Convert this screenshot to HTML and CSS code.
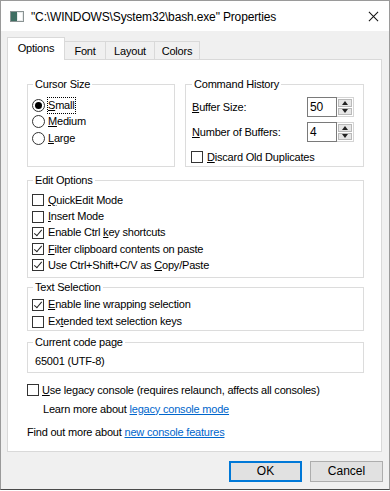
FILE: index.html
```
<!DOCTYPE html>
<html>
<head>
<meta charset="utf-8">
<link rel="stylesheet" href="styles.css">
</head>
<body>
<div class="window">
  <div class="titlebar">
    <svg class="app-icon" width="14" height="11" viewBox="0 0 14 11">
      <rect x="0.5" y="0.5" width="13" height="10" fill="#e9ecec" stroke="#8a9393"/>
      <rect x="1" y="1" width="6" height="9" fill="#3e6e62"/>
      <rect x="8" y="2" width="4" height="7" fill="#ffffff"/>
    </svg>
    <span class="title">"C:\WINDOWS\System32\bash.exe" Properties</span>
    <svg class="close" width="12" height="12" viewBox="0 0 12 12">
      <path d="M1 1 L11 11 M11 1 L1 11" stroke="#111" stroke-width="1.1" fill="none"/>
    </svg>
  </div>

  <div class="content">
    <div class="tabs">
      <div class="tab active t-options">Options</div>
      <div class="tab t-font">Font</div>
      <div class="tab t-layout">Layout</div>
      <div class="tab t-colors">Colors</div>
    </div>

    <div class="panel">
      <div class="row1">
        <fieldset class="group cursor">
          <legend>Cursor Size</legend>
          <div class="opt"><span class="radio on"></span><span class="focus"><u>S</u>mall</span></div>
          <div class="opt"><span class="radio"></span><span><u>M</u>edium</span></div>
          <div class="opt"><span class="radio"></span><span><u>L</u>arge</span></div>
        </fieldset>
        <fieldset class="group history">
          <legend>Command History</legend>
          <div class="spinrow">
            <span class="lbl"><u>B</u>uffer Size:</span>
            <div class="spinner">
              <span class="field">50</span>
              <span class="arrows"><span class="up"></span><span class="down"></span></span>
            </div>
          </div>
          <div class="spinrow second">
            <span class="lbl"><u>N</u>umber of Buffers:</span>
            <div class="spinner">
              <span class="field">4</span>
              <span class="arrows"><span class="up"></span><span class="down"></span></span>
            </div>
          </div>
          <div class="opt discard"><span class="check"></span><span><u>D</u>iscard Old Duplicates</span></div>
        </fieldset>
      </div>

      <fieldset class="group edit">
        <legend>Edit Options</legend>
        <div class="opt"><span class="check"></span><span><u>Q</u>uickEdit Mode</span></div>
        <div class="opt"><span class="check"></span><span><u>I</u>nsert Mode</span></div>
        <div class="opt"><span class="check on"></span><span>Enable Ctrl <u>k</u>ey shortcuts</span></div>
        <div class="opt"><span class="check on"></span><span><u>F</u>ilter clipboard contents on paste</span></div>
        <div class="opt"><span class="check on"></span><span>Use Ctrl+Shift+C/V as <u>C</u>opy/Paste</span></div>
      </fieldset>

      <fieldset class="group textsel">
        <legend>Text Selection</legend>
        <div class="opt"><span class="check on"></span><span><u>E</u>nable line wrapping selection</span></div>
        <div class="opt"><span class="check"></span><span>Ex<u>t</u>ended text selection keys</span></div>
      </fieldset>

      <fieldset class="group codepage">
        <legend>Current code page</legend>
        <div class="cp">65001 (UTF-8)</div>
      </fieldset>

      <div class="opt legacy"><span class="check"></span><span><u>U</u>se legacy console (requires relaunch, affects all consoles)</span></div>
      <div class="learn">Learn more about <a href="#">legacy console mode</a></div>
      <div class="findout">Find out more about <a href="#">new console features</a></div>
    </div>

    <div class="buttons">
      <div class="btn default">OK</div>
      <div class="btn">Cancel</div>
    </div>
  </div>
</div>
</body>
</html>
```
FILE: styles.css
```
* { box-sizing: border-box; }
html, body { margin: 0; padding: 0; background: #ffffff; }
body {
  font-family: "Liberation Sans", Arial, sans-serif;
  font-size: 11px;
  letter-spacing: -0.2px;
  color: #000;
}

.window {
  width: 390px;
  height: 490px;
  border: 1px solid #9a9a9a;
  border-bottom-color: #4a4a4a;
  background: #f0f0f0;
  display: flex;
  flex-direction: column;
}

.titlebar {
  height: 30px;
  background: #fff;
  display: flex;
  align-items: center;
  padding-left: 9px;
  flex: none;
}
.app-icon { flex: none; margin-right: 7px; margin-top: 1px; }
.title {
  font-size: 12px;
  letter-spacing: -0.15px;
  flex: 1;
  margin-top: 1px;
}
.close { flex: none; margin-right: 10px; margin-top: 1px; width: 11px; height: 11px; }

.content { flex: 1; display: flex; flex-direction: column; }

.tabs {
  display: flex;
  align-items: flex-end;
  padding-left: 6px;
  height: 28px;
  flex: none;
  position: relative;
  z-index: 2;
}
.tab {
  height: 18px;
  border: 1px solid #d9d9d9;
  border-bottom: none;
  border-left: none;
  background: #f0f0f0;
  text-align: center;
  line-height: 17px;
  padding-top: 1px;
  margin-bottom: 0;
}
.tab.active {
  height: 23px;
  border-left: 1px solid #d9d9d9;
  background: #fff;
  line-height: 20px;
  padding-top: 0;
  margin-bottom: -1px;
}
.t-options { width: 58px; }
.t-font { width: 41px; }
.t-layout { width: 49px; }
.t-colors { width: 45px; }

.panel {
  flex: none;
  margin-left: 6px;
  width: 375px;
  height: 393px;
  background: #fff;
  border: 1px solid #d9d9d9;
  padding: 17px 17px 0 19px;
  display: flex;
  flex-direction: column;
}

.group {
  margin: 0;
  border: 1px solid #dcdcdc;
  padding: 0 4px;
  min-width: 0;
}
.group legend {
  padding: 0 2px;
  margin-left: 1px;
  line-height: 15px;
  height: 15px;
}

.row1 { display: flex; gap: 10px; }
.cursor { width: 148px; padding-top: 5px; }
.history { width: 179px; padding: 5px 9px 1px 5px; }

.opt {
  display: flex;
  align-items: center;
  height: 16.5px;
  line-height: 15px;
  white-space: nowrap;
}
u { text-decoration: underline; text-underline-offset: 1px; }

.radio {
  width: 13px; height: 13px;
  border: 1px solid #333;
  border-radius: 50%;
  background: #fff;
  margin-right: 3px;
  flex: none;
  display: flex;
  align-items: center;
  justify-content: center;
}
.radio.on::after {
  content: "";
  width: 7px; height: 7px;
  border-radius: 50%;
  background: #000;
}
.focus {
  outline: 1px dotted #000;
  outline-offset: 0;
  line-height: 15px;
  margin-left: 0;
}

.check {
  width: 12px; height: 12px;
  border: 1px solid #333;
  background: #fff;
  margin-right: 4px;
  flex: none;
  position: relative;
}
.check.on::after {
  content: "";
  position: absolute;
  left: 3px; top: 0px;
  width: 3px; height: 7px;
  border: solid #222;
  border-width: 0 1.2px 1.2px 0;
  transform: rotate(40deg);
}
.cursor .opt .radio { margin-left: 0; }

.spinrow {
  display: flex;
  align-items: center;
  justify-content: space-between;
  height: 20px;
}
.spinrow.second { margin-top: 5px; }
.lbl { padding-left: 1px; }
.spinner { display: flex; height: 20px; }
.field {
  width: 30px;
  height: 20px;
  border: 1px solid #7a7a7a;
  padding-left: 2px;
  line-height: 18px;
  font-size: 12px;
  background: #fff;
}
.arrows {
  width: 17px;
  height: 20px;
  border: 1px solid #d4d4d4;
  border-left: none;
  background: #fff;
  display: flex;
  flex-direction: column;
  padding: 1px;
  gap: 1px;
}
.up, .down {
  flex: 1;
  background: #e6e6e6;
  border: 1px solid #b9b9b9;
  position: relative;
}
.up::after, .down::after {
  content: "";
  position: absolute;
  left: 50%;
  top: 50%;
  transform: translate(-50%, -50%);
  border-left: 3.5px solid transparent;
  border-right: 3.5px solid transparent;
}
.up::after { border-bottom: 4px solid #222; }
.down::after { border-top: 4px solid #222; }
.discard { margin-top: 6.75px; }

.edit { margin-top: 6px; padding-top: 4px; padding-bottom: 3px; }
.edit .opt { height: 16.25px; }
.textsel { margin-top: 2.5px; padding-top: 1px; padding-bottom: 0; }
.textsel .opt { height: 17px; }
.codepage { margin-top: 4px; padding-top: 4px; padding-bottom: 3px; }
.cp { line-height: 15px; padding-left: 3px; }

.legacy { margin-top: 9px; }
.legacy .check { margin-right: 3px; }
.learn { margin-top: 3px; line-height: 15px; padding-left: 16px; }
.findout { margin-top: 8px; line-height: 15px; padding-left: 0; }
a { color: #0066cc; text-decoration: underline; text-underline-offset: 1px; }

.buttons {
  display: flex;
  justify-content: flex-end;
  gap: 8px;
  padding-right: 6px;
  margin-top: 9px;
}
.btn {
  width: 73px;
  height: 21px;
  background: #e1e1e1;
  border: 1px solid #adadad;
  text-align: center;
  line-height: 19px;
  font-size: 12px;
  letter-spacing: 0;
}
.btn.default {
  border: 2px solid #0078d7;
  line-height: 17px;
}
```
